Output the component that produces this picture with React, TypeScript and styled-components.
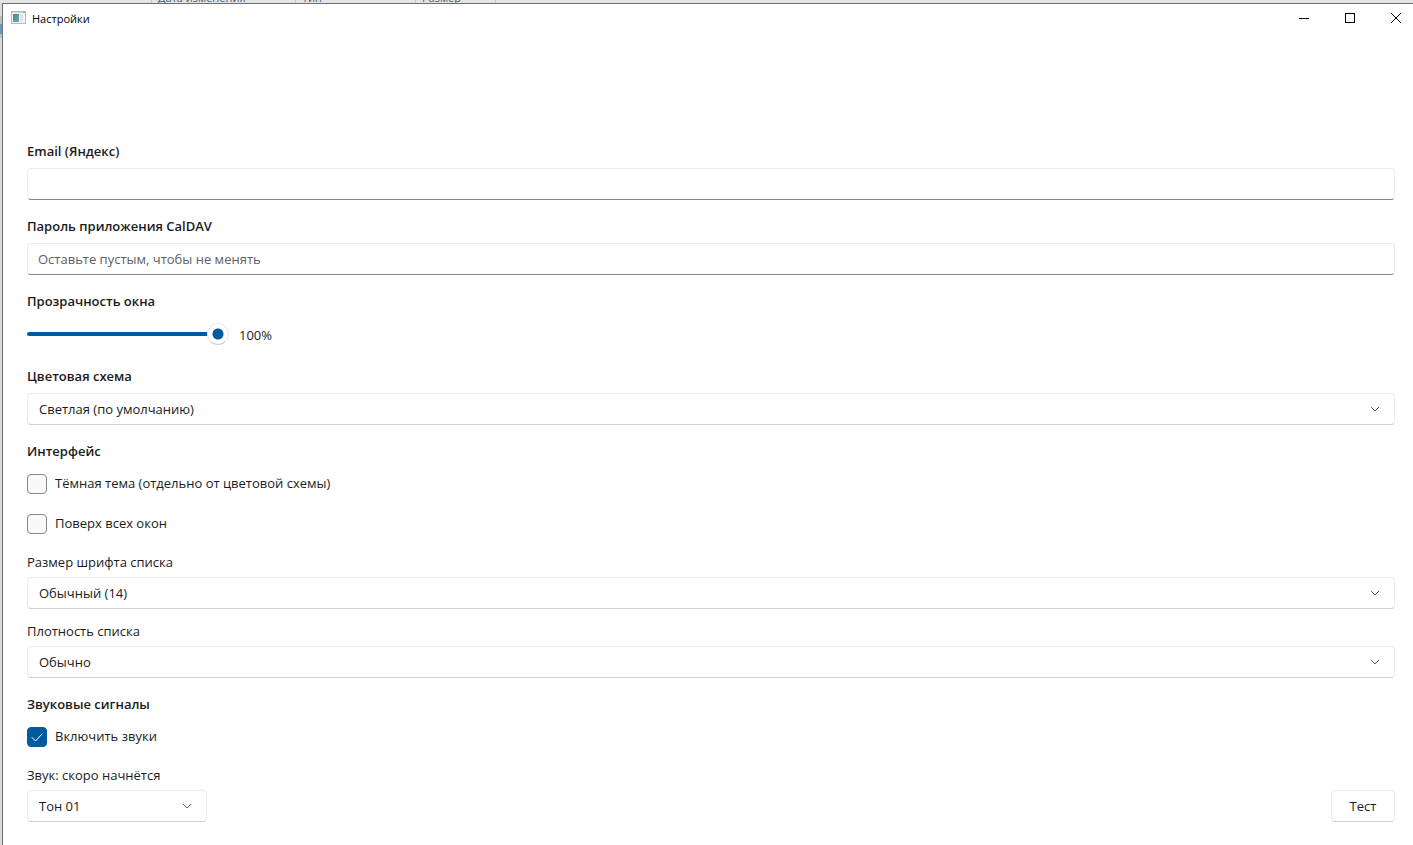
import React, { useState } from "react";
import styled, { createGlobalStyle } from "styled-components";

const GlobalStyle = createGlobalStyle`
  *, *::before, *::after { box-sizing: border-box; }
  body {
    margin: 0;
    background: #dcdcdc;
    color: #1b1b1b;
    font-family: "Open Sans", "Noto Sans", sans-serif;
    font-size: 13px;
    line-height: 21px;
  }
  button, input, select { font: inherit; color: inherit; margin: 0; }
`;

const accent = "#005a9e";

const Desktop = styled.div`
  display: flex;
  flex-direction: column;
  height: 100vh;
  overflow: hidden;
`;

const ExplorerHeader = styled.div`
  display: flex;
  align-items: flex-end;
  flex: none;
  height: 3px;
  padding-left: 151px;
  overflow: hidden;
  background: #e3e3e3;
`;

const ExplorerColumn = styled.span<{ $width: number }>`
  flex: none;
  width: ${(p) => p.$width}px;
  height: 10px;
  padding-left: 6px;
  border-left: 1px solid #c8c8c8;
  color: #4c607a;
  font-size: 11px;
  line-height: 10px;
`;

const DesktopBody = styled.div`
  display: flex;
  flex: 1;
  min-height: 0;
`;

const ExplorerEdge = styled.div`
  flex: none;
  width: 2px;
  background: linear-gradient(
    #dcdcdc 13px, #bdbdbd 13px, #bdbdbd 21px, #5f9cc0 21px, #5f9cc0 31px, #bdbdbd 31px, #bdbdbd 35px, #dcdcdc 35px
  );
`;

const Window = styled.div`
  flex: 1;
  min-width: 0;
  background: #ffffff;
  border-top: 1px solid #6e6e6e;
  border-left: 1px solid #6e6e6e;
`;

const TitleBar = styled.header`
  display: flex;
  align-items: center;
  height: 28px;
  padding-left: 8px;
`;

const Title = styled.h1`
  flex: 1;
  margin: 0 0 0 5px;
  color: #000000;
  font-size: 11px;
  font-weight: 400;
`;

const Controls = styled.div`
  display: flex;
  gap: 12px;
`;

const ControlButton = styled.button`
  display: flex;
  align-items: center;
  justify-content: center;
  width: 34px;
  height: 28px;
  padding: 0;
  border: 0;
  background: transparent;
`;

const Form = styled.form`
  display: flex;
  flex-direction: column;
  gap: 16px;
  padding: 109px 18px 24px 24px;
`;

const Section = styled.section`
  display: flex;
  flex-direction: column;
  gap: 6px;
`;

const Heading = styled.label`
  font-weight: 600;
`;

const GroupHeading = styled.h2`
  margin: 0;
  font-size: 13px;
  font-weight: 600;
`;

const Stack = styled.div`
  display: flex;
  flex-direction: column;
  gap: 8px;
`;

const Field = styled.div`
  display: flex;
  flex-direction: column;
  gap: 4px;
  padding-top: 4px;
`;

const TextBox = styled.input`
  width: 100%;
  height: 32px;
  padding: 0 10px;
  border: 1px solid #ececec;
  border-bottom-color: #868686;
  border-radius: 4px;
  background: #ffffff;
  outline: none;
  &::placeholder { color: #606060; opacity: 1; }
`;

const SelectFrame = styled.div<{ $compact?: boolean }>`
  display: grid;
  align-items: center;
  width: ${(p) => (p.$compact ? "180px" : "100%")};
  > * { grid-area: 1 / 1; }
  > svg { justify-self: end; margin-right: 15px; pointer-events: none; }
`;

const SelectBox = styled.select`
  appearance: none;
  width: 100%;
  height: 32px;
  padding: 0 32px 0 11px;
  border: 1px solid #ececec;
  border-bottom-color: #d0d0d0;
  border-radius: 4px;
  background: #ffffff;
  outline: none;
`;

const SliderRow = styled.div`
  display: flex;
  align-items: center;
  gap: 10px;
  height: 32px;
`;

const Slider = styled.input`
  appearance: none;
  width: 202px;
  height: 22px;
  background: transparent;
  outline: none;
  &::-webkit-slider-runnable-track {
    height: 4px;
    border-radius: 2px;
    background: ${accent};
  }
  &::-webkit-slider-thumb {
    appearance: none;
    width: 22px;
    height: 22px;
    margin-top: -9px;
    border: 1px solid #ececec;
    border-bottom-color: #d0d0d0;
    border-radius: 50%;
    background: radial-gradient(circle, ${accent} 5px, #ffffff 6px);
  }
`;

const SliderValue = styled.output`
  padding-top: 2px;
`;

const CheckRow = styled.label`
  display: flex;
  align-items: center;
  align-self: flex-start;
  gap: 8px;
  height: 32px;
`;

const CheckText = styled.span`
  padding-bottom: 2px;
`;

const CheckFrame = styled.span`
  display: grid;
  place-items: center;
  > * { grid-area: 1 / 1; }
  > svg { pointer-events: none; }
`;

const CheckInput = styled.input`
  appearance: none;
  width: 20px;
  height: 20px;
  border: 1px solid #868686;
  border-radius: 4px;
  background: #f9f9f9;
  &:checked { border-color: ${accent}; background: ${accent}; }
`;

const SoundRow = styled.div`
  display: flex;
  justify-content: space-between;
`;

const PushButton = styled.button`
  width: 64px;
  height: 32px;
  padding: 0;
  border: 1px solid #ececec;
  border-bottom-color: #d0d0d0;
  border-radius: 4px;
  background: #ffffff;
`;

function AppIcon() {
  return (
    <svg width="16" height="14" viewBox="0 0 16 14" aria-hidden="true">
      <defs>
        <linearGradient id="pane" x1="0" y1="0" x2="1" y2="1">
          <stop offset="0" stopColor="#4b82b4" />
          <stop offset="1" stopColor="#62b08a" />
        </linearGradient>
      </defs>
      <rect x="0.5" y="0.5" width="14" height="12" fill="#f4f5f5" stroke="#b4b9bd" />
      <path d="M1 1.5H12" stroke="#d2d7da" />
      <path d="M12 1.5H14" stroke="#7fc09c" />
      <rect x="2" y="3" width="6" height="8" fill="url(#pane)" />
      <rect x="9" y="3" width="3" height="8" fill="#e2e4e5" />
    </svg>
  );
}

function Chevron() {
  return (
    <svg width="10" height="6" viewBox="0 0 10 6" fill="none" aria-hidden="true">
      <path d="M1 1L5 5L9 1" stroke="#5c5c5c" />
    </svg>
  );
}

function Dropdown({ id, options, compact }: { id: string; options: string[]; compact?: boolean }) {
  return (
    <SelectFrame $compact={compact}>
      <SelectBox id={id}>
        {options.map((o) => (
          <option key={o}>{o}</option>
        ))}
      </SelectBox>
      <Chevron />
    </SelectFrame>
  );
}

function Check({ label, initial = false }: { label: string; initial?: boolean }) {
  const [on, setOn] = useState(initial);
  return (
    <CheckRow>
      <CheckFrame>
        <CheckInput type="checkbox" checked={on} onChange={(e) => setOn(e.target.checked)} />
        {on && (
          <svg width="12" height="12" viewBox="0 0 12 12" fill="none" aria-hidden="true">
            <path d="M1 6.5L4.5 10L11 3" stroke="#ffffff" strokeLinecap="round" strokeLinejoin="round" />
          </svg>
        )}
      </CheckFrame>
      <CheckText>{label}</CheckText>
    </CheckRow>
  );
}

export default function App() {
  const [opacity, setOpacity] = useState(100);
  return (
    <Desktop>
      <GlobalStyle />
      <ExplorerHeader>
        <ExplorerColumn $width={144}>Дата изменения</ExplorerColumn>
        <ExplorerColumn $width={120}>Тип</ExplorerColumn>
        <ExplorerColumn $width={80}>Размер</ExplorerColumn>
        <ExplorerColumn $width={20} />
      </ExplorerHeader>
      <DesktopBody>
        <ExplorerEdge />
        <Window>
          <TitleBar>
            <AppIcon />
            <Title>Настройки</Title>
            <Controls>
              <ControlButton aria-label="Свернуть">
                <svg width="10" height="10" viewBox="0 0 10 10">
                  <path d="M0 5.5H10" stroke="#000" />
                </svg>
              </ControlButton>
              <ControlButton aria-label="Развернуть">
                <svg width="10" height="10" viewBox="0 0 10 10" fill="none">
                  <rect x="0.5" y="0.5" width="9" height="9" stroke="#000" />
                </svg>
              </ControlButton>
              <ControlButton aria-label="Закрыть">
                <svg width="10" height="10" viewBox="0 0 10 10">
                  <path d="M0 0L10 10M10 0L0 10" stroke="#000" />
                </svg>
              </ControlButton>
            </Controls>
          </TitleBar>
          <Form onSubmit={(e) => e.preventDefault()}>
            <Section>
              <Heading htmlFor="email">Email (Яндекс)</Heading>
              <TextBox id="email" type="email" />
            </Section>
            <Section>
              <Heading htmlFor="password">Пароль приложения CalDAV</Heading>
              <TextBox id="password" type="password" placeholder="Оставьте пустым, чтобы не менять" />
            </Section>
            <Section>
              <Heading htmlFor="opacity">Прозрачность окна</Heading>
              <SliderRow>
                <Slider
                  id="opacity"
                  type="range"
                  min={20}
                  max={100}
                  value={opacity}
                  onChange={(e) => setOpacity(Number(e.target.value))}
                />
                <SliderValue htmlFor="opacity">{opacity}%</SliderValue>
              </SliderRow>
            </Section>
            <Section>
              <Heading htmlFor="scheme">Цветовая схема</Heading>
              <Dropdown id="scheme" options={["Светлая (по умолчанию)"]} />
            </Section>
            <Section>
              <GroupHeading>Интерфейс</GroupHeading>
              <Stack>
                <Check label="Тёмная тема (отдельно от цветовой схемы)" />
                <Check label="Поверх всех окон" />
                <Field>
                  <label htmlFor="fontsize">Размер шрифта списка</label>
                  <Dropdown id="fontsize" options={["Обычный (14)"]} />
                </Field>
                <Field>
                  <label htmlFor="density">Плотность списка</label>
                  <Dropdown id="density" options={["Обычно"]} />
                </Field>
              </Stack>
            </Section>
            <Section>
              <GroupHeading>Звуковые сигналы</GroupHeading>
              <Stack>
                <Check label="Включить звуки" initial />
                <Field>
                  <label htmlFor="sound">Звук: скоро начнётся</label>
                  <SoundRow>
                    <Dropdown id="sound" options={["Тон 01"]} compact />
                    <PushButton type="button">Тест</PushButton>
                  </SoundRow>
                </Field>
              </Stack>
            </Section>
          </Form>
        </Window>
      </DesktopBody>
    </Desktop>
  );
}
